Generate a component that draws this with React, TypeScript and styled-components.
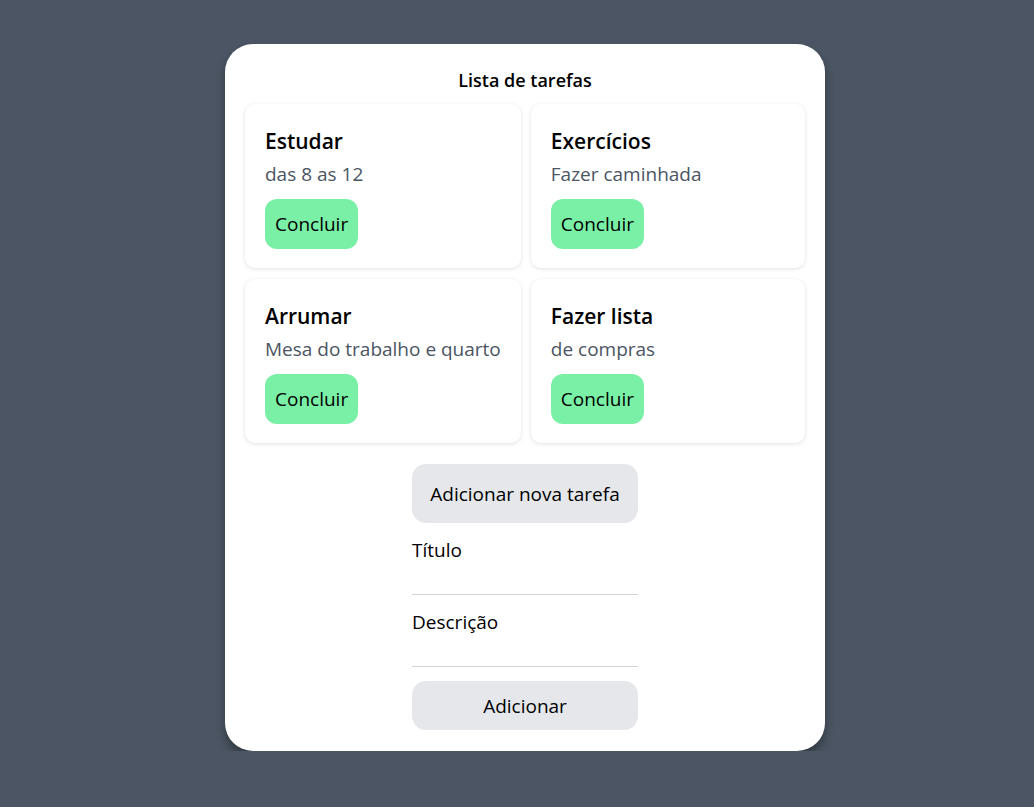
import React from "react";
import styled, { createGlobalStyle } from "styled-components";

const Global = createGlobalStyle`
  html, body { margin: 0; padding: 0; }
  body {
    background: #4b5563;
    font-family: "Open Sans", "Noto Sans", sans-serif;
    color: #000;
  }
`;

const Page = styled.div`
  display: flex;
  justify-content: center;
  align-items: flex-start;
  padding: 44px 0 0 16px;
`;

const Panel = styled.div`
  width: 600px;
  background: #fff;
  border-radius: 28px;
  box-shadow: 0 6px 10px rgba(0, 0, 0, 0.35);
  padding: 22px 20px 21px;
  box-sizing: border-box;
  display: flex;
  flex-direction: column;
  align-items: center;
`;

const Heading = styled.h1`
  margin: 0 0 10px;
  font-size: 18px;
  line-height: 28px;
  font-weight: 600;
`;

const Grid = styled.div`
  width: 100%;
  display: grid;
  grid-template-columns: 1fr 1fr;
  gap: 11px 10px;
`;

const TaskCard = styled.div`
  height: 164px;
  box-sizing: border-box;
  border-radius: 10px;
  background: #fff;
  box-shadow: 0 1px 4px rgba(0, 0, 0, 0.12);
  padding: 22px 20px 20px;
  display: flex;
  flex-direction: column;
  align-items: flex-start;
`;

const TaskTitle = styled.div`
  font-size: 21px;
  line-height: 30px;
  font-weight: 600;
  white-space: nowrap;
`;

const TaskDesc = styled.div`
  font-size: 19px;
  line-height: 28px;
  margin-top: 4px;
  color: #4b5563;
  white-space: nowrap;
`;

const DoneButton = styled.button`
  flex-shrink: 0;
  margin-top: 11px;
  height: 50px;
  padding: 0 10px;
  border: none;
  border-radius: 12px;
  background: #7af0a6;
  font-family: inherit;
  font-size: 19px;
  color: #000;
`;

const Form = styled.div`
  width: 226px;
  margin-top: 21px;
  display: flex;
  flex-direction: column;
`;

const GrayButton = styled.button<{ $h: number; $mt?: number }>`
  width: 100%;
  height: ${(p) => p.$h}px;
  margin-top: ${(p) => p.$mt ?? 0}px;
  border: none;
  border-radius: 14px;
  background: #e5e7eb;
  font-family: inherit;
  font-size: 19px;
  color: #000;
`;

const Field = styled.label`
  display: flex;
  flex-direction: column;
  font-size: 19px;
  line-height: 28px;
  margin-top: 13px;
`;

const Input = styled.input`
  height: 28px;
  border: none;
  border-bottom: 1px solid #d1d5db;
  outline: none;
  padding: 0;
  font-family: inherit;
  font-size: 18px;
  margin-top: 2px;
`;

const tasks = [
  { title: "Estudar", desc: "das 8 as 12" },
  { title: "Exercícios", desc: "Fazer caminhada" },
  { title: "Arrumar", desc: "Mesa do trabalho e quarto" },
  { title: "Fazer lista", desc: "de compras" },
];

export default function App() {
  return (
    <>
      <Global />
      <Page>
        <Panel>
          <Heading>Lista de tarefas</Heading>
          <Grid>
            {tasks.map((t) => (
              <TaskCard key={t.title}>
                <TaskTitle>{t.title}</TaskTitle>
                <TaskDesc>{t.desc}</TaskDesc>
                <DoneButton>Concluir</DoneButton>
              </TaskCard>
            ))}
          </Grid>
          <Form>
            <GrayButton $h={59}>Adicionar nova tarefa</GrayButton>
            <Field>
              Título
              <Input />
            </Field>
            <Field>
              Descrição
              <Input />
            </Field>
            <GrayButton $h={49} $mt={14}>Adicionar</GrayButton>
          </Form>
        </Panel>
      </Page>
    </>
  );
}
